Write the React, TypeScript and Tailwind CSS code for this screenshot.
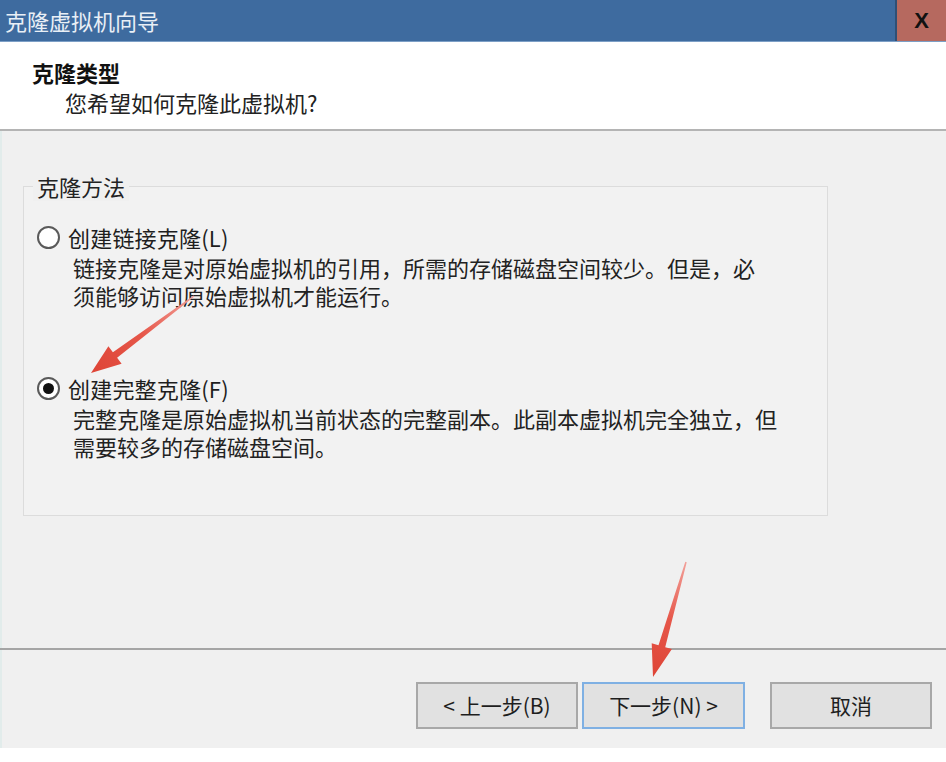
import React from 'react';

const FONT = '"Noto Sans CJK SC", "Noto Sans", sans-serif';

type Pt = [number, number];

// tapered annotation arrow, tail -> tip
const arrowPoints = (tail: Pt, tip: Pt, tailW: number, shaftW: number, headW: number, headL: number) => {
  const dx = tip[0] - tail[0];
  const dy = tip[1] - tail[1];
  const len = Math.sqrt(dx * dx + dy * dy);
  const ux = dx / len;
  const uy = dy / len;
  const nx = -uy;
  const ny = ux;
  const bx = tip[0] - ux * headL;
  const by = tip[1] - uy * headL;
  const pts: Pt[] = [
    [tail[0] + (nx * tailW) / 2, tail[1] + (ny * tailW) / 2],
    [bx + (nx * shaftW) / 2, by + (ny * shaftW) / 2],
    [bx + (nx * headW) / 2, by + (ny * headW) / 2],
    tip,
    [bx - (nx * headW) / 2, by - (ny * headW) / 2],
    [bx - (nx * shaftW) / 2, by - (ny * shaftW) / 2],
    [tail[0] - (nx * tailW) / 2, tail[1] - (ny * tailW) / 2],
  ];
  return pts.map((p) => `${p[0].toFixed(1)},${p[1].toFixed(1)}`).join(' ');
};

const Radio = ({ checked }: { checked?: boolean }) => (
  <span className="w-[23px] h-[23px] rounded-full border-[2px] border-[#5a5a5a] bg-white flex items-center justify-center shrink-0">
    {checked && <span className="w-[11px] h-[11px] rounded-full bg-[#111]" />}
  </span>
);

const Option = ({ label, lines, checked }: { label: string; lines: string[]; checked?: boolean }) => (
  <div>
    <div className="flex items-center gap-[8px] h-[30px]">
      <Radio checked={checked} />
      <span className="text-[22px] leading-[30px] tracking-[0.2px] text-[#1e1e1e] whitespace-nowrap">{label}</span>
    </div>
    <div className="ml-[36px] mt-[1px]">
      {lines.map((l) => (
        <div key={l} className="text-[22px] leading-[28px] text-[#222] whitespace-nowrap">
          {l}
        </div>
      ))}
    </div>
  </div>
);

const Btn = ({ children, primary, w }: { children: React.ReactNode; primary?: boolean; w: string }) => (
  <button
    className={`${w} h-[47px] bg-[#e1e1e1] text-[21px] text-[#1e1e1e] flex items-center justify-center border-[2px] ${
      primary ? 'border-[#7fb0e3]' : 'border-[#a8a8a8]'
    }`}
  >
    {children}
  </button>
);

export default function App() {
  const a1 = arrowPoints([194, 296], [91, 373], 1.5, 7, 22, 30);
  const a2 = arrowPoints([686, 562], [653, 677], 1.5, 7, 21, 32);

  return (
    <div className="w-[946px] h-[762px] bg-white relative overflow-hidden flex flex-col" style={{ fontFamily: FONT }}>
      {/* title bar */}
      <div className="h-[42px] flex bg-[#3e6b9f] border-b border-[#7c9fc6] shrink-0">
        <div className="flex-1 pl-[5px] flex items-center text-[22px] text-[#e9eff6]">克隆虚拟机向导</div>
        <div className="w-[51px] bg-[#b6695f] border-l-2 border-[#2f4f75] flex items-center justify-center">
          <span className="text-[22px] font-bold text-[#111]" style={{ fontFamily: '"Liberation Sans", Arial, sans-serif' }}>
            X
          </span>
        </div>
      </div>

      {/* header */}
      <div className="h-[87px] pt-[15px] pl-[32px] shrink-0 bg-white">
        <div className="text-[22px] leading-[30px] font-bold text-[#111]">克隆类型</div>
        <div className="ml-[33px] text-[22px] leading-[30px] text-[#222]">您希望如何克隆此虚拟机?</div>
      </div>
      <div className="h-[2px] bg-[#b4b4b4] shrink-0" />

      {/* body */}
      <div className="h-[517px] bg-[#f0f0f0] border-l-2 border-[#e2eceb] pt-[40px] pl-[21px] shrink-0">
        <fieldset className="w-[805px] h-[345px] border border-[#dcdcdc] bg-[#f2f2f2] px-[13px]">
          <legend className="-ml-[4px] px-[4px] text-[22px] leading-[30px] text-[#222] bg-[#f0f0f0]">克隆方法</legend>
          <div className="pt-[21px]">
            <Option
              label="创建链接克隆(L)"
              lines={['链接克隆是对原始虚拟机的引用，所需的存储磁盘空间较少。但是，必', '须能够访问原始虚拟机才能运行。']}
            />
            <div className="h-[64px]" />
            <Option
              checked
              label="创建完整克隆(F)"
              lines={['完整克隆是原始虚拟机当前状态的完整副本。此副本虚拟机完全独立，但', '需要较多的存储磁盘空间。']}
            />
          </div>
        </fieldset>
      </div>

      {/* footer */}
      <div className="h-[2px] bg-[#a5a5a5] shrink-0" />
      <div className="h-[98px] bg-[#f0f0f0] border-l-2 border-[#e2eceb] pt-[32px] pr-[14px] flex justify-end items-start shrink-0">
        <Btn w="w-[162px]">&lt; 上一步(B)</Btn>
        <div className="w-[4px]" />
        <Btn w="w-[163px]" primary>
          下一步(N) &gt;
        </Btn>
        <div className="w-[25px]" />
        <Btn w="w-[162px]">取消</Btn>
      </div>
      <div className="flex-1 bg-white" />

      {/* red annotation arrows */}
      <svg className="absolute inset-0 pointer-events-none" width="946" height="762" viewBox="0 0 946 762">
        <defs>
          <linearGradient id="g1" gradientUnits="userSpaceOnUse" x1="194" y1="296" x2="91" y2="373">
            <stop offset="0" stopColor="#f2a099" />
            <stop offset="0.5" stopColor="#e6574a" />
            <stop offset="1" stopColor="#de4436" />
          </linearGradient>
          <linearGradient id="g2" gradientUnits="userSpaceOnUse" x1="686" y1="562" x2="653" y2="677">
            <stop offset="0" stopColor="#f2a099" />
            <stop offset="0.5" stopColor="#e6574a" />
            <stop offset="1" stopColor="#de4436" />
          </linearGradient>
        </defs>
        <polygon points={a1} fill="url(#g1)" />
        <polygon points={a2} fill="url(#g2)" />
      </svg>
    </div>
  );
}
